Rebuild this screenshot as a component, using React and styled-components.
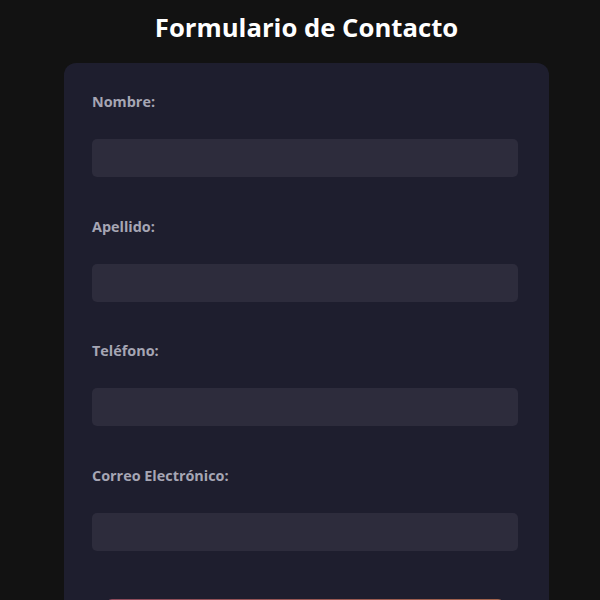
import React from "react";
import styled, { createGlobalStyle } from "styled-components";

const GlobalStyle = createGlobalStyle`
  body {
    margin: 0;
    background-color: #121212;
    font-family: "Open Sans", "Noto Sans", sans-serif;
  }
`;

const Page = styled.main`
  display: flex;
  flex-flow: column nowrap;
  align-items: center;
  padding: 10px 0 0 13px;
`;

const Title = styled.h1`
  margin: 0 0 17px;
  color: #ffffff;
  font-size: 25.7px;
  font-weight: 700;
  line-height: 36px;
`;

const Card = styled.form`
  box-sizing: border-box;
  display: flex;
  flex-flow: column nowrap;
  width: 485px;
  padding: 30px 31px 40px 28px;
  border-radius: 12px;
  background-color: #1e1e2e;
`;

const Field = styled.div`
  display: flex;
  flex-flow: column nowrap;
  margin-bottom: 40.5px;

  &:last-of-type {
    margin-bottom: 48px;
  }
`;

const Label = styled.label`
  margin-bottom: 28px;
  color: #a6a6b4;
  font-size: 14.4px;
  font-weight: 700;
  line-height: 18px;
`;

const Input = styled.input`
  box-sizing: border-box;
  height: 38px;
  padding: 0 12px;
  border: none;
  border-radius: 5px;
  outline: none;
  background-color: #2d2c3c;
  color: #ffffff;
  font-family: inherit;
  font-size: 14px;
`;

const Submit = styled.button`
  align-self: center;
  width: 398px;
  height: 40px;
  border: none;
  border-radius: 6px;
  background: linear-gradient(90deg, #8e4a5c, #a3644c);
  color: #ffffff;
  font-family: inherit;
  font-size: 15px;
  font-weight: 700;
`;

const fields = [
  { id: "nombre", label: "Nombre:", type: "text" },
  { id: "apellido", label: "Apellido:", type: "text" },
  { id: "telefono", label: "Teléfono:", type: "tel" },
  { id: "correo", label: "Correo Electrónico:", type: "email" },
];

const App = () => {
  return (
    <>
      <GlobalStyle />
      <Page>
        <Title>Formulario de Contacto</Title>
        <Card onSubmit={(e) => e.preventDefault()}>
          {fields.map((f) => (
            <Field key={f.id}>
              <Label htmlFor={f.id}>{f.label}</Label>
              <Input id={f.id} name={f.id} type={f.type} />
            </Field>
          ))}
          <Submit type="submit">Enviar</Submit>
        </Card>
      </Page>
    </>
  );
};

export default App;
